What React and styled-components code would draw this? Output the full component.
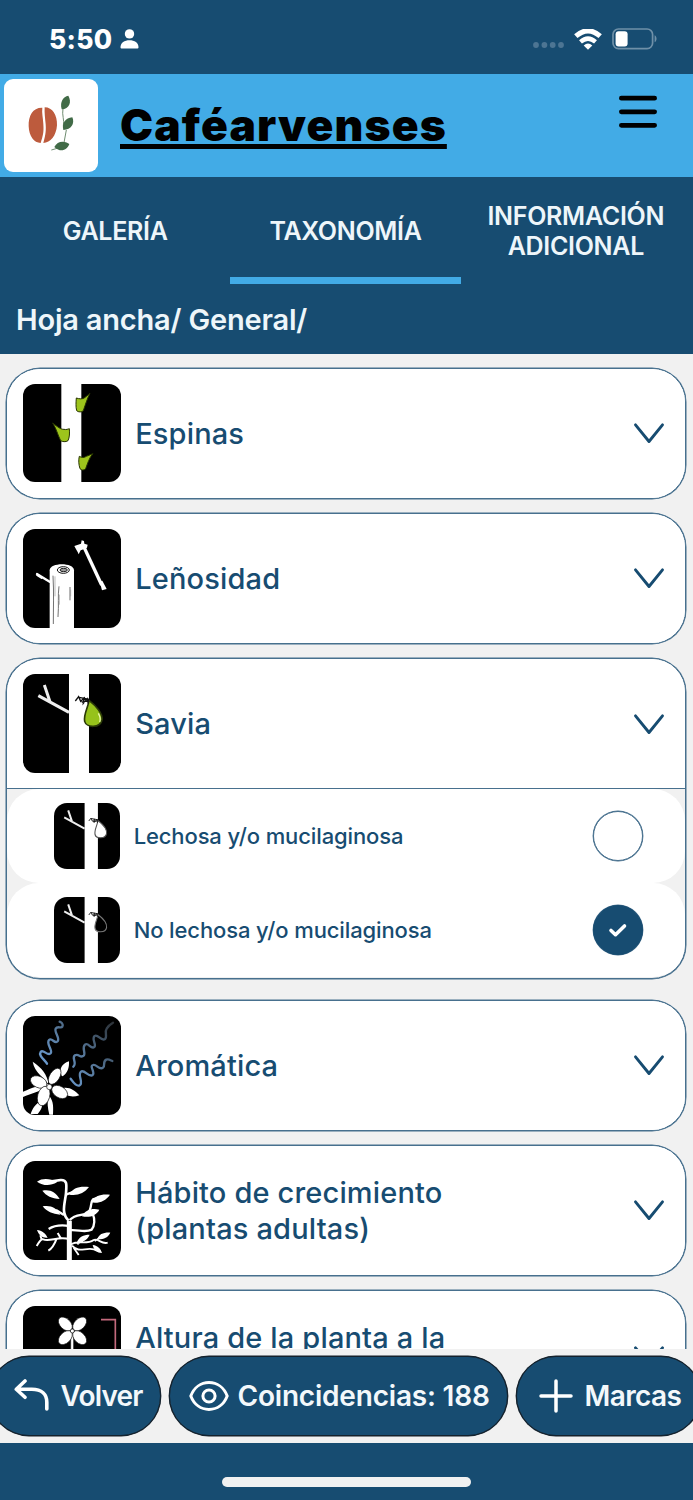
import React, { useState } from "react";
import styled, { createGlobalStyle } from "styled-components";

const navy = "#174c71";
const sky = "#42abe6";
const pale = "#f1f1f1";
const line = "#47708e";

const GlobalStyle = createGlobalStyle`
  * { box-sizing: border-box; }
  body {
    margin: 0;
    font-family: Inter, "Liberation Sans", sans-serif;
    background: ${pale};
    color: ${navy};
  }
  button { font: inherit; color: inherit; cursor: pointer; }
  svg { display: block; flex: none; }
`;

/* ---------- drawings ---------- */

const PersonIcon = () => (
  <svg width="19" height="20" viewBox="0 0 18 20" fill="#fff">
    <circle cx="9" cy="4.9" r="4.7" />
    <path d="M0 18.2C0 13.6 4 11.2 9 11.2s9 2.4 9 7c0 1-.6 1.3-1.4 1.3H1.4C.6 19.5 0 19.2 0 18.2z" />
  </svg>
);

const SignalDots = () => (
  <svg width="32" height="8" viewBox="0 0 32 8" fill="#4d7593">
    <circle cx="4" cy="4" r="2.9" />
    <circle cx="12.4" cy="4" r="2.9" />
    <circle cx="20.7" cy="4" r="2.9" />
    <circle cx="29" cy="4" r="2.9" />
  </svg>
);

const WifiIcon = () => (
  <svg width="28" height="21" viewBox="0 0 28 21" fill="none" stroke="#fff">
    <path d="M1.8 7.2Q14-3.6 26.2 7.2" strokeWidth="5" />
    <path d="M6.5 12.8Q14 6.4 21.5 12.8" strokeWidth="4.4" />
    <path d="M14 20.7L9.7 16.4Q14 12.600 18.300 16.400z" fill="#fff" stroke="none" />
  </svg>
);

const BatteryIcon = () => (
  <svg width="45" height="22" viewBox="0 0 45 22">
    <rect x="1" y="1" width="39.6" height="19.6" rx="5.5" fill="none" stroke="#6f90a8" strokeWidth="1.7" />
    <rect x="3.6" y="3.2" width="12" height="15.2" rx="3" fill="#fff" />
    <path d="M42.6 7.3c2.6 1.2 2.6 5.8 0 7z" fill="#6f90a8" />
  </svg>
);

const Logo = () => (
  <svg width="94" height="94" viewBox="0 0 282 282">
    <g transform="translate(-12 -237)">
      <path d="M127 323C99 322 85 346 86 379c1 29 16 50 36 50 6-21 10-29 8-57-1-19-5-33-3-49z" fill="#bd5b3d" />
      <path d="M134 322c24 0 38 24 37 54-2 31-20 53-41 53 4-16 9-30 7-56-2-20-4-35-3-51z" fill="#bd5b3d" />
      <g fill="none" stroke="#6f8d70" strokeWidth="3">
        <path d="M189 326c-4 20 5 32 1 53M199 390l-7 38M175 444l-21 6" />
      </g>
      <g fill="#416b47">
        <path d="M185 328c-6-22 4-38 20-41 11 20 3 39-20 41z" />
        <path d="M190 390c-5-20 6-36 27-38 8 18-3 38-27 38z" />
        <path d="M163 441c9-17 27-21 45-9-6 17-25 28-45 9z" />
      </g>
    </g>
  </svg>
);

const MenuIcon = () => (
  <svg width="40" height="34" viewBox="0 0 40 34" stroke="#000" strokeWidth="4.8" strokeLinecap="round">
    <path d="M3.4 3.2h33.200M3.400 16.800h33.200M3.400 30.300h33.200" />
  </svg>
);

const Chevron = () => (
  <svg width="32" height="22" viewBox="0 0 32 22" fill="none" stroke={navy} strokeWidth="2.9" strokeLinecap="round" strokeLinejoin="round">
    <path d="M2.5 2.8L16 19.5 29.5 2.8" />
  </svg>
);

const CheckIcon = () => (
  <svg width="20" height="16" viewBox="0 0 20 16" fill="none" stroke="#fff" strokeWidth="3.6" strokeLinecap="round" strokeLinejoin="round">
    <path d="M3 8.5l4.500 4.200L16.500 4" />
  </svg>
);

const BackIcon = () => (
  <svg width="36" height="34" viewBox="0 0 36 34" fill="none" stroke="#fff" strokeWidth="3.6" strokeLinecap="round" strokeLinejoin="round">
    <path d="M11 2L2.3 10.3l8.700 8M2.800 10.300h15c10 0 15 5 15 13V30" />
  </svg>
);

const EyeIcon = () => (
  <svg width="40" height="30" viewBox="0 0 40 30" fill="none" stroke="#fff" strokeWidth="3">
    <path d="M1.8 15C5 6.500 12 1.600 20 1.600S35 6.500 38.200 15C35 23.500 28 28.400 20 28.400S5 23.500 1.800 15z" strokeLinejoin="round" />
    <circle cx="20" cy="15" r="6.1" />
  </svg>
);

const PlusIcon = () => (
  <svg width="34" height="34" viewBox="0 0 34 34" stroke="#fff" strokeWidth="3.5" strokeLinecap="round">
    <path d="M2 17h30M17 2v30" />
  </svg>
);

const Thorns = () => (
  <g transform="translate(-68 -72)">
    <path d="M183 72h60v297h-60z" fill="#fff" />
    <g fill="#9dc41c" stroke="#263300" strokeWidth="3" strokeLinejoin="round">
      <path d="M228 114c8 3 19 4 25-1l16-13c-7 13-13 31-20 52-4 5-15 5-20 0-3-12-2-25-1-38z" />
      <path d="M157 189c14 11 25 20 34 19 7 2 12-1 16-2 1 13 1 26-4 36-7 5-17 3-22 0-10-20-12-34-24-53z" />
      <path d="M237 289c6 4 15 5 21 0l20-8c-11 11-16 29-22 45-5 6-13 5-17 0-4-13-5-25-2-37z" />
    </g>
  </g>
);

const Trunk = () => (
  <g transform="translate(-68 -508)" stroke="#fff">
    <path d="M148 806V632c0-24 73-24 73 0v174z" fill="#fff" stroke="none" />
    <path d="M110 643l38 23M111 646l13 8" strokeWidth="7" strokeLinecap="round" />
    <path d="M250 560l54 116" strokeWidth="10" />
    <path d="M298 666l8-3 13 25-14 4z" fill="#fff" stroke="none" />
    <path d="M222 559l20-7 2-10 7 2 1 8 10 3-2 9-10 5-9 3-6 12c-4-10-8-15-13-25z" fill="#fff" stroke="none" />
    <ellipse cx="189" cy="631" rx="18" ry="10" fill="none" stroke="#111" strokeWidth="3" />
    <ellipse cx="190" cy="631" rx="11" ry="5" fill="#999" stroke="#222" strokeWidth="3" />
    <path d="M158 648c3 50 1 97 1 145M176 680c-4 27 0 56-3 92M209 682v40" fill="none" stroke="#555" strokeWidth="2.5" />
    <path d="M164 650v60M211 690v20M177 705v30" fill="none" stroke="#999" strokeWidth="2" />
  </g>
);

const Sap = ({ drop, outline = "#2b3a08", light }) => (
  <g transform="translate(-68 -72)">
    <path d="M206 72h60v297h-60z" fill="#fff" />
    <path d="M114 137l92 50M149 155l-17-50" stroke="#eee" strokeWidth="9" fill="none" />
    <path d="M266 151c-2 21-17 41-13 63 5 20 47 21 52-4 3-19-18-43-39-59z" fill={drop} stroke={outline} strokeWidth="5" />
    <path d="M225 153l10-13 6 14 10-9-2 15 12-14 3 15M236 142l32 6M244 156l22-4" fill="none" stroke="#111" strokeWidth="4" />
    {light && <path d="M294 190c6 10 7 18 4 26" fill="none" stroke="#e8f5a9" strokeWidth="4" />}
  </g>
);

const Aroma = () => (
  <g transform="translate(-68 -78)">
    <defs>
      <linearGradient id="scent" gradientUnits="userSpaceOnUse" x1="150" y1="250" x2="320" y2="80">
        <stop offset="0" stopColor="#6b9bd0" />
        <stop offset=".45" stopColor="#567799" />
        <stop offset="1" stopColor="#2c3238" />
      </linearGradient>
    </defs>
    <g fill="none" stroke="url(#scent)" strokeWidth="7" strokeLinecap="round" strokeLinejoin="round">
      <path d="M140 221c-6-11-27-24-19-35 8-10 21 14 30 4 8-9-15-28-5-40 9-9 17 14 26 4 8-10-11-27-6-38 6-10 16 1 20-6 4-8-3-13-8-15" />
      <path d="M219 230c13-11-7-26 5-34 11-7 16 10 26 1 8-8-7-23 4-33 10-9 18 16 28 7 8-8-10-24 1-33 9-8 20 18 31 9 8-7-2-21 5-31 4-7 10-13 19-18" />
      <path d="M211 266c7 9 15 25 27 20 13-7-8-33 4-41 10-8 24 19 35 10 9-8-11-26 1-30 10-4 19 17 30 8 8-7-2-18 10-24 6-3 13 2 18 4" />
    </g>
    <g fill="#fff">
      <path d="M143 281c-15-22-39-32-46-66 17 12 38 27 46 58zM184 257c-8-20-1-35 22-43 1 20-4 35-19 45zM148 286c-23 18-51 23-80 35v-16c25-10 53-22 77-23zM190 294c18-3 34 8 47 22-23 8-40 1-54-9zM126 337c1 16-7 28-14 35H91c5-16 16-32 31-38zM147 318c13 16 12 34 11 56h-11c-5-20-7-37-3-55z" />
      <g stroke="#111" strokeWidth="2">
        <ellipse cx="163" cy="259" rx="15" ry="27" transform="rotate(32 163 259)" />
        <ellipse cx="115" cy="276" rx="17" ry="26" transform="rotate(-66 115 276)" />
        <ellipse cx="178" cy="306" rx="17" ry="26" transform="rotate(-58 178 306)" />
        <ellipse cx="130" cy="318" rx="18" ry="30" transform="rotate(16 130 318)" />
        <circle cx="147" cy="291" r="8" />
      </g>
    </g>
  </g>
);

const Habit = () => (
  <g transform="translate(-68 -511)">
    <g fill="none" stroke="#fff" strokeWidth="8" strokeLinejoin="round">
      <path d="M205 690c-24-23-11-52-8-82 2-27 4-41-16-40l-27 4" />
      <path d="M207 808V690" strokeWidth="15" />
      <path d="M199 611l18-7M191 673l-24-15M208 688c16-18 35-13 53-20 16-12 7-31 17-42l16-5M277 668c8 20 6 36-3 49-20 10-40-1-67 2M207 706c-26-4-45-2-62 9" strokeWidth="7" />
      <path d="M207 746c-29-12-60 9-78 0-9-3-14 12-20 20M124 747l-4-13M181 742l-9-15M169 744c-6 16-14 30-25 36" strokeWidth="6" />
      <path d="M207 766c20-22 49-1 73-18 13-6 24 14 42 8M215 765c21 23 38 5 66 11l17 8M231 761l23-17M283 751l22-13M220 771l15 22" strokeWidth="5.5" />
    </g>
    <g fill="#fff">
      <path d="M110 573c18-12 41-9 60 2-20 11-41 11-60-2zM126 600c23-5 40 4 52 25-24-2-40-9-52-25zM127 647c23-5 43 5 53 25-24-3-40-8-53-25zM207 612c10-20 29-26 59-23-14 19-35 27-59 23zM271 635c13-20 32-26 58-23-14 20-33 27-58 23zM245 677c10-20 31-25 52-20-9 18-29 25-52 20zM110 718c15 1 26 11 32 23-17 2-26-8-32-23zM291 746c5-15 18-21 39-20-7 15-21 21-39 20zM230 754c7-16 18-22 38-22-7 15-18 23-38 22zM277 763c16 2 24 11 28 24-17-2-25-11-28-24z" />
    </g>
  </g>
);

const Height = () => (
  <g transform="translate(-68 -947)">
    <g fill="#fff" stroke="#111" strokeWidth="2">
      <path d="M211 1028h9v130h-9z" />
      <ellipse cx="195" cy="1001" rx="16" ry="25" transform="rotate(-45 195 1001)" />
      <ellipse cx="238" cy="1001" rx="16" ry="25" transform="rotate(45 238 1001)" />
      <ellipse cx="195" cy="1042" rx="16" ry="25" transform="rotate(45 195 1042)" />
      <ellipse cx="238" cy="1042" rx="16" ry="25" transform="rotate(-45 238 1042)" />
      <circle cx="216" cy="1022" r="6" />
    </g>
    <path d="M302 988h43v170" fill="none" stroke="#c3697c" strokeWidth="5" />
  </g>
);

/* ---------- layout ---------- */

const Screen = styled.div`
  display: flex;
  flex-direction: column;
  width: 693px;
  height: 1500px;
  overflow: hidden;
  background: ${pale};
`;

const StatusBar = styled.div`
  display: flex;
  align-items: center;
  height: 74px;
  padding: 4px 36px 0 49px;
  background: ${navy};
  color: #fff;
`;

const Clock = styled.span`
  width: 71px;
  font-size: 26.5px;
  font-weight: 800;
  letter-spacing: 0.3px;
`;

const StatusIcons = styled.div`
  display: flex;
  align-items: center;
  gap: 10px;
  margin-left: auto;

  svg:first-child { margin-top: 12px; }
`;

const Header = styled.header`
  display: flex;
  height: 103px;
  padding: 5px 35px 0 4px;
  background: ${sky};
  color: #000;
`;

const LogoBox = styled.div`
  width: 94px;
  height: 93px;
  overflow: hidden;
  border-radius: 9px;
  background: #fff;
`;

const Title = styled.h1`
  flex: 1;
  margin: 20px 0 0 22px;
  font-size: 44.3px;
  line-height: 52px;
  font-weight: 900;
  letter-spacing: 1.15px;
  text-decoration: underline;
  text-decoration-thickness: 5px;
  text-underline-offset: 3px;
  text-decoration-skip-ink: none;
`;

const MenuButton = styled.button`
  align-self: flex-start;
  margin-top: 16px;
  padding: 0;
  border: 0;
  background: none;
`;

const Tabs = styled.nav`
  display: flex;
  height: 107px;
  padding-right: 2px;
  background: ${navy};
`;

const Tab = styled.button`
  flex: 1;
  padding: 7px 0 0;
  border: 0;
  border-bottom: 7px solid ${(p) => (p.$active ? sky : "transparent")};
  background: none;
  color: #eef6fa;
  font-size: 25px;
  line-height: 30px;
  font-weight: 600;
  letter-spacing: -0.3px;
`;

const Crumbs = styled.div`
  height: 70px;
  padding: 18px 16px 0;
  background: ${navy};
  color: #eef6fa;
  font-size: 29px;
  line-height: 36px;
  font-weight: 600;
  letter-spacing: -0.2px;
`;

const List = styled.main`
  flex: none;
  height: 994.5px;
  padding: 13.5px 7px 0 6px;
  overflow: hidden;
`;

const Card = styled.section`
  margin-bottom: ${(p) => (p.$open ? "21px" : "14.3px")};
  overflow: hidden;
  border: 1px solid ${line};
  border-radius: 34px;
  background: ${(p) => (p.$open ? pale : "#fff")};
  box-shadow: 0 0 0 0.5px ${line};
`;

const CardHead = styled.div`
  display: flex;
  align-items: center;
  height: 129px;
  padding: 0 20px 0 15.5px;
  background: #fff;
`;

const Tile = styled.svg`
  width: ${(p) => p.$size}px;
  height: ${(p) => p.$size}px;
  border-radius: ${(p) => p.$radius}px;
  background: #000;
`;

const CardLabel = styled.h2`
  flex: 1;
  max-width: 340px;
  margin: 1px auto 0 14px;
  padding-bottom: ${(p) => (p.$raised ? "36px" : 0)};
  font-size: 29px;
  line-height: 36px;
  font-weight: 500;
  letter-spacing: 0.16px;
`;

const Options = styled.div`
  padding-bottom: 0.6px;
  border-top: 1px solid ${line};
`;

const Option = styled.div`
  display: flex;
  align-items: center;
  height: 94px;
  padding: 0 42px 0 47px;
  border-radius: 32px;
  background: #fff;
`;

const OptionLabel = styled.span`
  flex: 1;
  margin-left: 14px;
  font-size: 22px;
  font-weight: 500;
  letter-spacing: -0.12px;
`;

const Radio = styled.button`
  display: grid;
  place-items: center;
  width: 50px;
  height: 50px;
  padding: 0;
  border: 1px solid ${(p) => (p.$checked ? navy : line)};
  border-radius: 50%;
  background: ${(p) => (p.$checked ? navy : "#fff")};
  box-shadow: 0 0 0 0.4px ${line};
`;

const Actions = styled.div`
  display: flex;
  justify-content: center;
  gap: 8px;
  height: 94.5px;
  padding-top: 7.5px;
  padding-right: 4px;
`;

const Action = styled.button`
  display: flex;
  flex: none;
  align-items: center;
  gap: ${(p) => p.$gap}px;
  width: ${(p) => p.$width}px;
  height: 79.5px;
  padding: 0 0 0 ${(p) => p.$left}px;
  border: 1px solid #14212c;
  border-radius: 40px;
  background: ${navy};
  box-shadow: 0 0 0 0.4px #14212c;
  color: #f3f8fb;
  font-size: 28px;
  font-weight: 600;
  letter-spacing: ${(p) => p.$tracking}px;
  white-space: nowrap;
`;

const HomeArea = styled.footer`
  display: flex;
  flex: 1;
  justify-content: center;
  padding-top: 34px;
  background: ${navy};
`;

const HomeBar = styled.div`
  width: 249px;
  height: 10px;
  border-radius: 5px;
  background: ${pale};
`;

const TraitCard = ({ label, art, raised, children }) => (
  <Card $open={!!children}>
    <CardHead>
      <Tile $size={98.67} $radius={12} viewBox="0 0 296 296">
        {art}
      </Tile>
      <CardLabel $raised={raised}>{label}</CardLabel>
      <Chevron />
    </CardHead>
    {children && <Options>{children}</Options>}
  </Card>
);

const sapOptions = [
  { id: "si", label: "Lechosa y/o mucilaginosa", drop: "#fff", outline: "#555" },
  { id: "no", label: "No lechosa y/o mucilaginosa", drop: "#000", outline: "#777" },
];

const tabs = ["GALERÍA", "TAXONOMÍA", "INFORMACIÓN ADICIONAL"];

const App = () => {
  const [tab, setTab] = useState("TAXONOMÍA");
  const [sap, setSap] = useState("no");

  return (
    <Screen>
      <GlobalStyle />
      <StatusBar>
        <Clock>5:50</Clock>
        <PersonIcon />
        <StatusIcons>
          <SignalDots />
          <WifiIcon />
          <BatteryIcon />
        </StatusIcons>
      </StatusBar>

      <Header>
        <LogoBox>
          <Logo />
        </LogoBox>
        <Title>Caféarvenses</Title>
        <MenuButton aria-label="Menú">
          <MenuIcon />
        </MenuButton>
      </Header>

      <Tabs>
        {tabs.map((name) => (
          <Tab key={name} $active={name === tab} onClick={() => setTab(name)}>
            {name}
          </Tab>
        ))}
      </Tabs>
      <Crumbs>Hoja ancha/ General/</Crumbs>

      <List>
        <TraitCard label="Espinas" art={<Thorns />} />
        <TraitCard label="Leñosidad" art={<Trunk />} />
        <TraitCard label="Savia" art={<Sap drop="#96c21b" light />}>
          {sapOptions.map((o) => (
            <Option key={o.id}>
              <Tile $size={65.67} $radius={13} viewBox="0 0 296 296">
                <Sap drop={o.drop} outline={o.outline} />
              </Tile>
              <OptionLabel>{o.label}</OptionLabel>
              <Radio $checked={sap === o.id} aria-label={o.label} onClick={() => setSap(o.id)}>
                {sap === o.id && <CheckIcon />}
              </Radio>
            </Option>
          ))}
        </TraitCard>
        <TraitCard label="Aromática" art={<Aroma />} />
        <TraitCard label="Hábito de crecimiento (plantas adultas)" art={<Habit />} />
        <TraitCard label="Altura de la planta a la" art={<Height />} raised />
      </List>

      <Actions>
        <Action $width={172} $left={24} $gap={11} $tracking={-0.8}>
          <BackIcon />
          Volver
        </Action>
        <Action $width={339} $left={19} $gap={9} $tracking={-0.2}>
          <EyeIcon />
          Coincidencias: 188
        </Action>
        <Action $width={185} $left={22} $gap={12} $tracking={-0.6}>
          <PlusIcon />
          Marcas
        </Action>
      </Actions>

      <HomeArea>
        <HomeBar />
      </HomeArea>
    </Screen>
  );
};

export default App;
